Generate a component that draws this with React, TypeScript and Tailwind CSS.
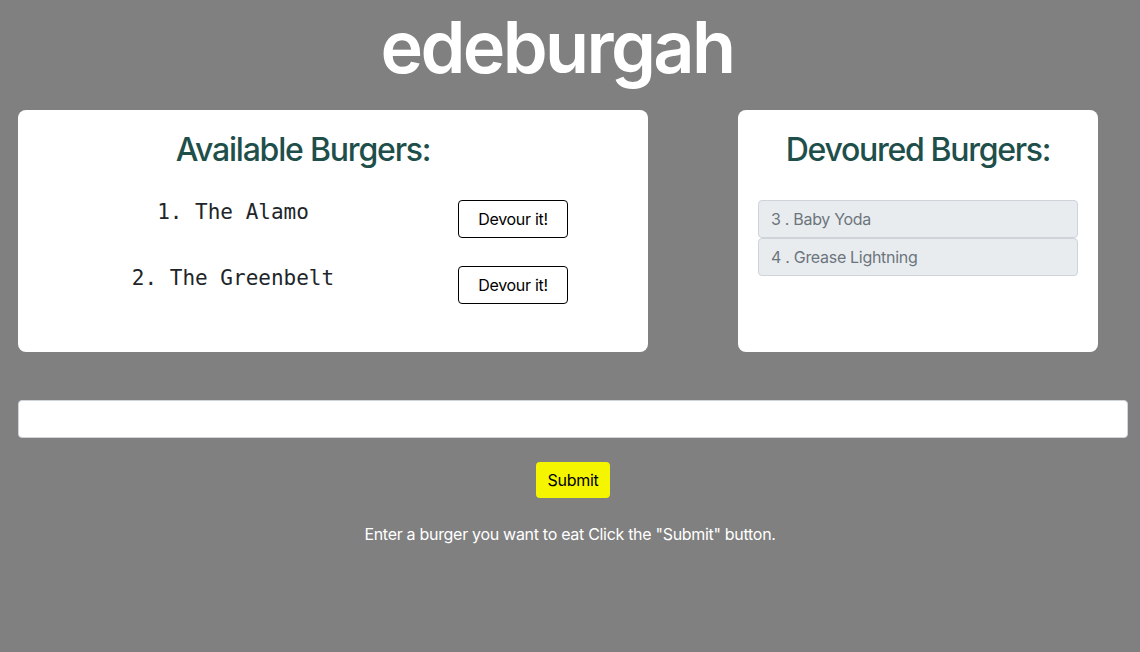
import React from "react";

export default function App() {
  const available = ["The Alamo", "The Greenbelt"];
  const devoured = [
    { id: 3, name: "Baby Yoda" },
    { id: 4, name: "Grease Lightning" },
  ];
  return (
    <div
      className="min-h-[652px] w-full bg-[#808080] pb-10"
      style={{ fontFamily: "Inter, 'Noto Sans', sans-serif" }}
    >
      <h1 className="pr-[26px] text-center text-[72px] font-semibold leading-[86px] tracking-[-2.6px] text-white pt-[4px]">
        edeburgah
      </h1>
      <div className="mt-[20px] flex px-[18px] gap-[90px]">
        <div className="h-[242px] w-[630px] rounded-[8px] bg-white pt-[20px]">
          <h2 className="pr-[60px] text-center text-[32px] font-medium leading-[40px] tracking-[-1.2px] text-[#1f4f4b]">
            Available Burgers:
          </h2>
          <div className="mt-[30px] flex flex-col gap-[28px]">
            {available.map((b, i) => (
              <div key={b} className="flex items-start">
                <div
                  className="w-[430px] text-center text-[21px] leading-[24px] text-[#212529]"
                  style={{ fontFamily: "'DejaVu Sans Mono', 'Liberation Mono', monospace" }}
                >
                  {i + 1}. {b}
                </div>
                <button className="ml-[10px] h-[38px] w-[110px] rounded-[4px] border border-black bg-white text-[16px] tracking-[-0.3px] text-black">
                  Devour it!
                </button>
              </div>
            ))}
          </div>
        </div>
        <div className="h-[242px] w-[360px] rounded-[8px] bg-white px-[20px] pt-[20px]">
          <h2 className="text-center text-[32px] font-medium leading-[40px] tracking-[-1.3px] text-[#1f4f4b]">
            Devoured Burgers:
          </h2>
          <ul className="mt-[30px]">
            {devoured.map((d) => (
              <li
                key={d.id}
                className="flex h-[38px] items-center rounded-[4px] border border-[#ced4da] bg-[#e9ecef] px-[12px] text-[16px] tracking-[-0.3px] text-[#6c757d]"
              >
                {d.id} . {d.name}
              </li>
            ))}
          </ul>
        </div>
      </div>
      <div className="mt-[48px] pl-[18px] pr-[12px]">
        <input
          type="text"
          className="block h-[38px] w-full rounded-[4px] border border-[#ced4da] bg-white px-3"
        />
      </div>
      <div className="mt-[24px] flex justify-center pl-[6px]">
        <button className="h-[36px] rounded-[4px] bg-[#f5f500] px-[12px] text-[16px] tracking-[-0.3px] text-black">
          Submit
        </button>
      </div>
      <p className="mt-[24px] text-center text-[16px] tracking-[-0.3px] text-white">
        Enter a burger you want to eat Click the "Submit" button.
      </p>
    </div>
  );
}
